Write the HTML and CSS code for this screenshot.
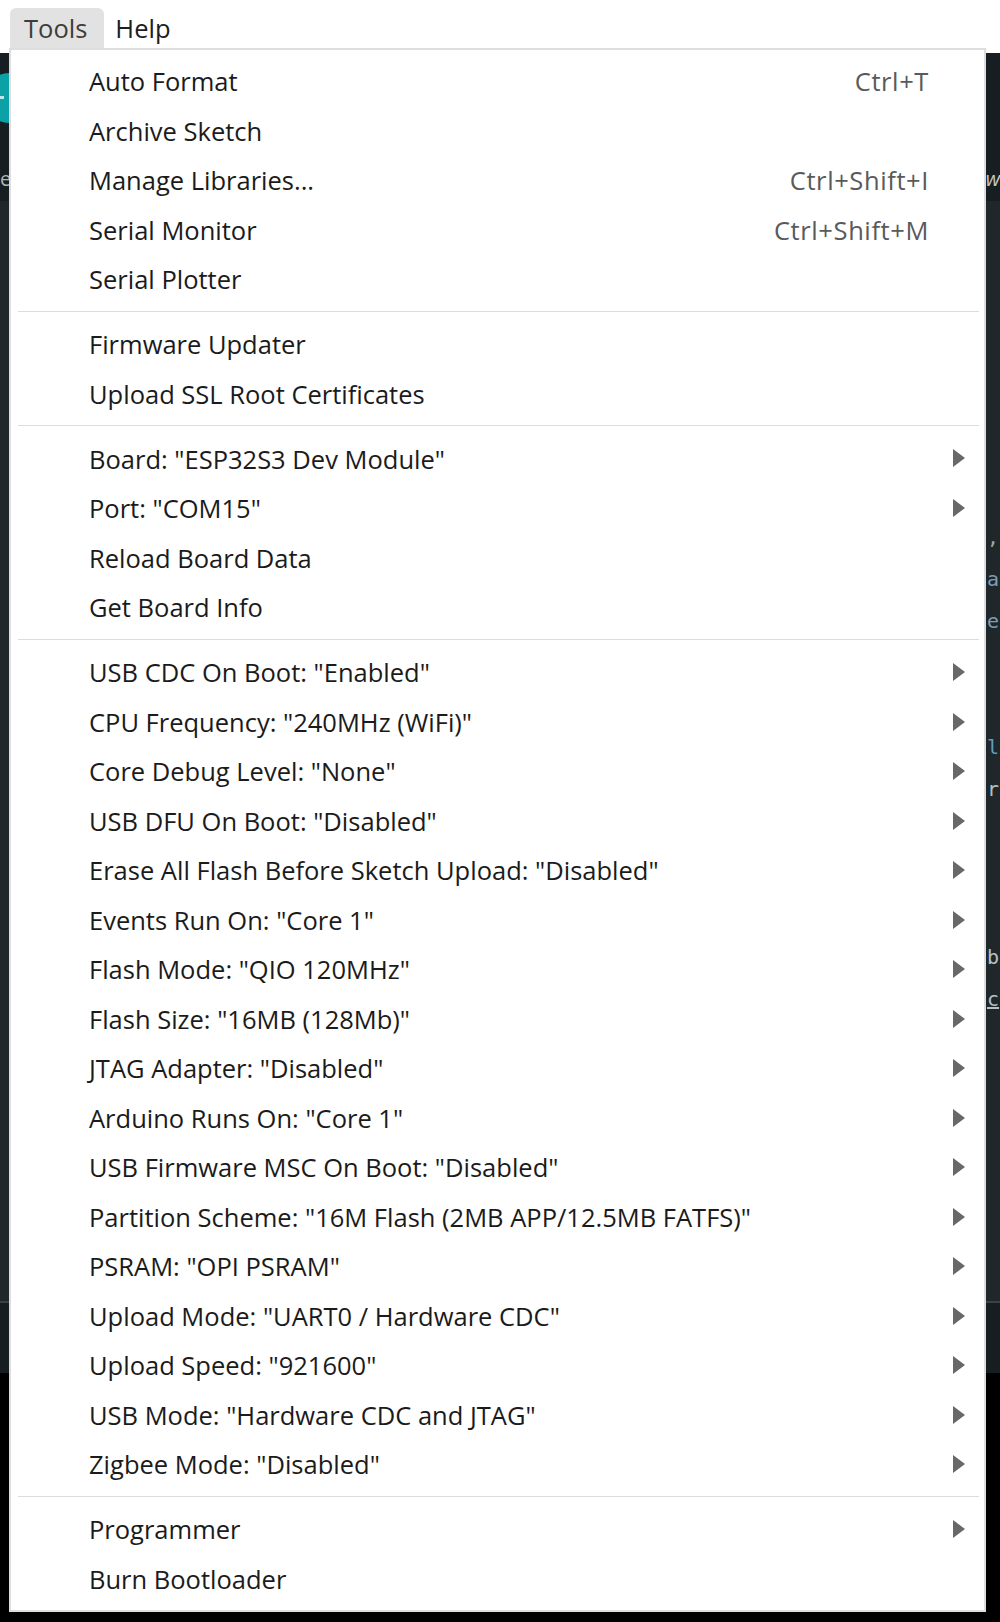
FILE: index.html
```html
<!DOCTYPE html>
<html lang="en">
<head>
<meta charset="utf-8">
<title>Arduino IDE - Tools menu</title>
<link rel="stylesheet" href="styles.css">
</head>
<body>
<div class="screen">
  <div class="menubar">
    <div class="menubar-item active">Tools</div>
    <div class="menubar-item">Help</div>
  </div>

  <div class="ide-header">
    <div class="verify-btn"><span class="verify-mark"></span></div>
    <div class="header-row">
      <span class="hdr-left">e</span>
      <span class="hdr-right">w</span>
    </div>
  </div>

  <div class="editor">
    <div class="code-line"></div>
    <div class="code-line"></div>
    <div class="code-line"></div>
    <div class="code-line"></div>
    <div class="code-line"></div>
    <div class="code-line"></div>
    <div class="code-line"></div>
    <div class="code-line"><span class="code tick">,</span></div>
    <div class="code-line"><span class="code blue">a</span></div>
    <div class="code-line"><span class="code blue">e</span></div>
    <div class="code-line"></div>
    <div class="code-line"></div>
    <div class="code-line"><span class="code cyan">l</span></div>
    <div class="code-line"><span class="code grey">r</span></div>
    <div class="code-line"></div>
    <div class="code-line"></div>
    <div class="code-line"></div>
    <div class="code-line"><span class="code grey">b</span></div>
    <div class="code-line"><span class="code grey underline">c</span></div>
  </div>
  <div class="panel-divider"></div>
  <div class="panel"></div>

  <div class="dropdown">
    <div class="item"><span class="label">Auto Format</span><span class="shortcut">Ctrl+T</span><span class="sub"></span></div>
    <div class="item"><span class="label">Archive Sketch</span><span class="sub"></span></div>
    <div class="item"><span class="label">Manage Libraries...</span><span class="shortcut">Ctrl+Shift+I</span><span class="sub"></span></div>
    <div class="item"><span class="label">Serial Monitor</span><span class="shortcut">Ctrl+Shift+M</span><span class="sub"></span></div>
    <div class="item"><span class="label">Serial Plotter</span><span class="sub"></span></div>
    <div class="sep"></div>
    <div class="item"><span class="label">Firmware Updater</span><span class="sub"></span></div>
    <div class="item"><span class="label">Upload SSL Root Certificates</span><span class="sub"></span></div>
    <div class="sep"></div>
    <div class="item"><span class="label">Board: "ESP32S3 Dev Module"</span><span class="sub"><span class="arrow"></span></span></div>
    <div class="item"><span class="label">Port: "COM15"</span><span class="sub"><span class="arrow"></span></span></div>
    <div class="item"><span class="label">Reload Board Data</span><span class="sub"></span></div>
    <div class="item"><span class="label">Get Board Info</span><span class="sub"></span></div>
    <div class="sep"></div>
    <div class="item"><span class="label">USB CDC On Boot: "Enabled"</span><span class="sub"><span class="arrow"></span></span></div>
    <div class="item"><span class="label">CPU Frequency: "240MHz (WiFi)"</span><span class="sub"><span class="arrow"></span></span></div>
    <div class="item"><span class="label">Core Debug Level: "None"</span><span class="sub"><span class="arrow"></span></span></div>
    <div class="item"><span class="label">USB DFU On Boot: "Disabled"</span><span class="sub"><span class="arrow"></span></span></div>
    <div class="item"><span class="label">Erase All Flash Before Sketch Upload: "Disabled"</span><span class="sub"><span class="arrow"></span></span></div>
    <div class="item"><span class="label">Events Run On: "Core 1"</span><span class="sub"><span class="arrow"></span></span></div>
    <div class="item"><span class="label">Flash Mode: "QIO 120MHz"</span><span class="sub"><span class="arrow"></span></span></div>
    <div class="item"><span class="label">Flash Size: "16MB (128Mb)"</span><span class="sub"><span class="arrow"></span></span></div>
    <div class="item"><span class="label">JTAG Adapter: "Disabled"</span><span class="sub"><span class="arrow"></span></span></div>
    <div class="item"><span class="label">Arduino Runs On: "Core 1"</span><span class="sub"><span class="arrow"></span></span></div>
    <div class="item"><span class="label">USB Firmware MSC On Boot: "Disabled"</span><span class="sub"><span class="arrow"></span></span></div>
    <div class="item"><span class="label">Partition Scheme: "16M Flash (2MB APP/12.5MB FATFS)"</span><span class="sub"><span class="arrow"></span></span></div>
    <div class="item"><span class="label">PSRAM: "OPI PSRAM"</span><span class="sub"><span class="arrow"></span></span></div>
    <div class="item"><span class="label">Upload Mode: "UART0 / Hardware CDC"</span><span class="sub"><span class="arrow"></span></span></div>
    <div class="item"><span class="label">Upload Speed: "921600"</span><span class="sub"><span class="arrow"></span></span></div>
    <div class="item"><span class="label">USB Mode: "Hardware CDC and JTAG"</span><span class="sub"><span class="arrow"></span></span></div>
    <div class="item"><span class="label">Zigbee Mode: "Disabled"</span><span class="sub"><span class="arrow"></span></span></div>
    <div class="sep"></div>
    <div class="item"><span class="label">Programmer</span><span class="sub"><span class="arrow"></span></span></div>
    <div class="item"><span class="label">Burn Bootloader</span><span class="sub"></span></div>
  </div>
</div>
</body>
</html>
```

FILE: styles.css
```css
* { box-sizing: border-box; }

html, body {
  margin: 0;
  padding: 0;
  background: #000;
}

body {
  font-family: "Open Sans", "Noto Sans", sans-serif;
}

.screen {
  position: relative;
  width: 1000px;
  height: 1622px;
  overflow: hidden;
  background: #000;
  display: flex;
  flex-direction: column;
}

/* ---------- top menubar ---------- */
.menubar {
  height: 53px;
  flex: none;
  background: #ffffff;
  display: flex;
  align-items: flex-start;
  padding: 8px 0 0 10px;
}

.menubar-item {
  height: 40px;
  padding: 1px 15px 0 11px;
  line-height: 39px;
  font-size: 25.5px;
  color: #1e1e1e;
  white-space: nowrap;
}

.menubar-item.active {
  background: #e2e2e2;
  border-radius: 6px 6px 0 0;
  padding: 1px 17px 0 14px;
  color: #3d3d3d;
}

/* ---------- IDE background ---------- */
.ide-header {
  height: 148px;
  flex: none;
  background: #171e21;
  position: relative;
  display: flex;
  flex-direction: column;
  justify-content: flex-end;
}

.verify-btn {
  position: absolute;
  left: -16px;
  top: 20px;
  width: 50px;
  height: 50px;
  border-radius: 50%;
  background: #0ca1a6;
}

.verify-mark {
  position: absolute;
  left: 14px;
  top: 23px;
  width: 6px;
  height: 3px;
  background: #bfe6e7;
}

.header-row {
  height: 40px;
  display: flex;
  justify-content: space-between;
  align-items: center;
  font-family: "Open Sans", sans-serif;
  font-size: 20px;
  color: #b4b4b4;
  padding-bottom: 6px;
}

.hdr-left { margin-left: 0; }
.hdr-right { margin-right: 0; color: #c8c8c8; font-style: italic; }

.editor {
  height: 1100px;
  flex: none;
  background: #1f272a;
  padding-top: 21px;
  overflow: hidden;
}

.code-line {
  height: 42px;
  line-height: 42px;
  padding-left: 987px;
  white-space: nowrap;
  font-family: "DejaVu Sans Mono", monospace;
  font-size: 20px;
}

.code { color: #8aa6b8; }
.code.blue { color: #7f9db2; }
.code.cyan { color: #5b9fc4; }
.code.grey { color: #b7c0c4; }
.code.tick { color: #9aa7ad; }
.code.underline { text-decoration: underline; }

.panel-divider {
  height: 2px;
  flex: none;
  background: #3a4245;
}

.panel {
  height: 70px;
  flex: none;
  background: #171e21;
}

/* ---------- dropdown menu ---------- */
.dropdown {
  position: absolute;
  left: 9px;
  top: 48px;
  width: 977px;
  background: #ffffff;
  border: 2px solid #dedede;
  padding: 7px 0 6px;
  font-family: "Open Sans", "Noto Sans", sans-serif;
  font-size: 25.5px;
  color: #1b1b1b;
}

.item {
  display: flex;
  align-items: center;
  height: 49.5px;
  line-height: 49.5px;
  padding: 0 19px 0 78px;
  white-space: nowrap;
}

.label {
  flex: 1;
}

.shortcut {
  color: #5a5a5a;
  letter-spacing: 0.6px;
}

.sub {
  width: 36px;
  flex: none;
  display: flex;
  justify-content: flex-end;
  align-items: center;
}

.arrow {
  width: 0;
  height: 0;
  border-left: 12px solid #686868;
  border-top: 9px solid transparent;
  border-bottom: 9px solid transparent;
  margin-bottom: 2px;
}

.sep {
  height: 1px;
  background: #dcdcdc;
  margin: 6px 5px 8.6px 7px;
}
```
